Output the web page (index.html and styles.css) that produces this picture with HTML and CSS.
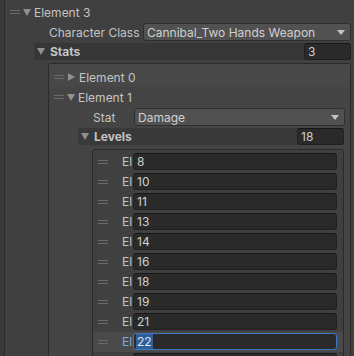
FILE: index.html
```html
<!DOCTYPE html>
<html lang="en">
<head>
    <meta charset="UTF-8">
    <title>Inspector</title>
    <link rel="stylesheet" href="styles.css">
</head>
<body>
<div class="inspector">
    <div class="list outer">
        <div class="row">
            <span class="handle"></span><span class="fold open"></span><span class="label">Element 3</span>
        </div>
        <div class="prop">
            <span class="prop-label wide">Character Class</span>
            <div class="popup"><span>Cannibal_Two Hands Weapon</span><i class="arrow"></i></div>
        </div>
        <div class="header">
            <span class="fold open"></span><span class="title">Stats</span><span class="field count">3</span>
        </div>
        <div class="list stats">
            <div class="row hover">
                <span class="handle"></span><span class="fold closed"></span><span class="label">Element 0</span>
            </div>
            <div class="row">
                <span class="handle"></span><span class="fold open"></span><span class="label">Element 1</span>
            </div>
            <div class="prop">
                <span class="prop-label">Stat</span>
                <div class="popup"><span>Damage</span><i class="arrow"></i></div>
            </div>
            <div class="header levels-head">
                <span class="fold open"></span><span class="title">Levels</span><span class="field count">18</span>
            </div>
            <div class="list levels">
                <div class="item"><span class="handle"></span><span class="item-label">El</span><span class="field">8</span></div>
                <div class="item"><span class="handle"></span><span class="item-label">El</span><span class="field">10</span></div>
                <div class="item"><span class="handle"></span><span class="item-label">El</span><span class="field">11</span></div>
                <div class="item"><span class="handle"></span><span class="item-label">El</span><span class="field">13</span></div>
                <div class="item"><span class="handle"></span><span class="item-label">El</span><span class="field">14</span></div>
                <div class="item"><span class="handle"></span><span class="item-label">El</span><span class="field">16</span></div>
                <div class="item"><span class="handle"></span><span class="item-label">El</span><span class="field">18</span></div>
                <div class="item"><span class="handle"></span><span class="item-label">El</span><span class="field">19</span></div>
                <div class="item"><span class="handle"></span><span class="item-label">El</span><span class="field">21</span></div>
                <div class="item selected"><span class="handle"></span><span class="item-label">El</span><span class="field focus"><span class="sel">22</span></span></div>
                <div class="item"><span class="handle"></span><span class="item-label"></span><span class="field"></span></div>
            </div>
        </div>
    </div>
</div>
</body>
</html>
```

FILE: styles.css
```css
*{
    margin: 0;
    padding: 0;
    box-sizing: border-box;
}
html, body{
    width: 354px;
    height: 356px;
    overflow: hidden;
}
body{
    background: #3a3a3a;
    font-family: Inter, "Noto Sans", sans-serif;
    font-size: 12px;
    color: #c4c4c4;
}
.inspector{
    padding-top: 1px;
}
.list{
    border: 1px solid #2a2a2a;
    border-radius: 3px;
}
.outer{
    margin-left: 4px;
    margin-top: -4px;
    padding-top: 4px;
    width: 356px;
    height: 400px;
    background: #404040;
    padding-right: 8px;
}
.stats{
    margin: 3px 0 0 43px;
    background: #444444;
    padding-right: 5px;
    height: 320px;
}
.levels{
    margin: 4px 0 0 43px;
    margin-right: 1px;
    background: #404040;
    padding-top: 2px;
    height: 240px;
}

/* rows */
.row{
    display: flex;
    align-items: center;
    height: 20px;
    padding-left: 5px;
}
.row.hover{
    height: 23px;
    padding-top: 3px;
    background: #484848;
    margin-right: -5px;
}
.handle{
    flex: none;
    width: 10px;
    height: 4px;
    border-top: 1px solid #6a6a6a;
    border-bottom: 1px solid #6a6a6a;
    margin-right: 3px;
}
.fold{
    flex: none;
    width: 0;
    height: 0;
}
.fold.open{
    border-left: 4px solid transparent;
    border-right: 4px solid transparent;
    border-top: 7px solid #909090;
    margin-right: 3px;
}
.fold.closed{
    border-top: 4px solid transparent;
    border-bottom: 4px solid transparent;
    border-left: 7px solid #909090;
    margin-right: 4px;
    margin-left: 1px;
}
.label{
    white-space: nowrap;
}

/* label + popup */
.prop{
    display: flex;
    align-items: center;
    height: 20px;
    padding-left: 44px;
}
.prop-label{
    flex: none;
    width: 41px;
    white-space: nowrap;
}
.prop-label.wide{
    width: 94px;
}
.popup{
    flex: 1;
    height: 18px;
    background: #515151;
    border: 1px solid #2f2f2f;
    border-radius: 3px;
    padding: 0 5px 0 3px;
    display: flex;
    align-items: center;
    justify-content: space-between;
    color: #d0d0d0;
    white-space: nowrap;
}
.arrow{
    width: 0;
    height: 0;
    border-left: 4px solid transparent;
    border-right: 4px solid transparent;
    border-top: 5px solid #c4c4c4;
}

/* foldout headers */
.header{
    display: flex;
    align-items: center;
    height: 17px;
    margin-top: 1px;
    margin-left: 29px;
    padding-left: 3px;
    background: #363636;
}
.levels-head{
    margin-right: 1px;
    background: #393939;
}
.header .fold{
    margin-right: 5px;
}
.title{
    flex: 1;
    font-weight: bold;
}
.field{
    display: flex;
    align-items: center;
    height: 17px;
    background: #2a2a2a;
    border: 1px solid #212121;
    border-top-color: #171717;
    border-radius: 3px;
    padding-left: 3px;
    color: #cfcfcf;
}
.count{
    flex: none;
    width: 47px;
}

/* list items */
.item{
    display: flex;
    align-items: flex-start;
    height: 20px;
    padding-left: 5px;
    padding-right: 6px;
}
.item .handle{
    margin-top: 8px;
    margin-right: 14px;
}
.item-label{
    flex: none;
    width: 11px;
    overflow: hidden;
    white-space: nowrap;
    line-height: 20px;
}
.item .field{
    flex: 1;
    margin-top: 1px;
}
.item.selected{
    background: #4a4a4a;
}
.item.selected .item-label{
    color: #7ca6e2;
}
.field.focus{
    border-color: #3b79c0;
}
.sel{
    background: #335f98;
    color: #d8e4f2;
    padding: 0 1px;
    margin-left: -1px;
}
```
